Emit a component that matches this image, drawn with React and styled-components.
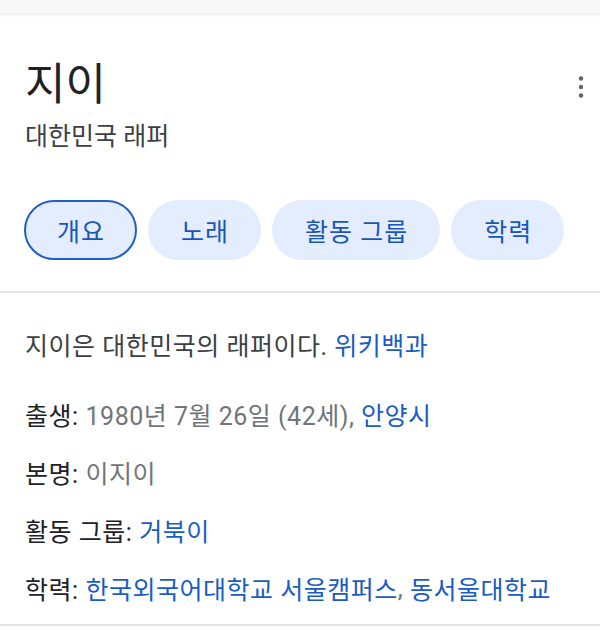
import React from 'react';
import styled, { createGlobalStyle } from 'styled-components';

const Global = createGlobalStyle`
  body {
    margin: 0;
    background: #ffffff;
    font-family: Roboto, "Noto Sans CJK KR", sans-serif;
  }
`

const Page = styled.div`
  width: 600px;
  height: 640px;
  overflow: hidden;
  background: #ffffff;
`

const TopStrip = styled.div`
  height: 13px;
  background: #f8f8f8;
  box-shadow: 0 1px 3px rgba(0, 0, 0, 0.08);
  border-bottom: 1px solid #efefef;
`

const Header = styled.div`
  display: flex;
  justify-content: space-between;
  align-items: flex-start;
  padding: 45px 3px 0 25px;
`

const Title = styled.h1`
  margin: 0;
  font-size: 44px;
  line-height: 52px;
  font-weight: 400;
  color: #202124;
`

const Subtitle = styled.div`
  margin-top: 11px;
  font-size: 25px;
  line-height: 30px;
  color: #3c4043;
`

const MoreButton = styled.button`
  width: 32px;
  height: 32px;
  margin-top: 12px;
  padding: 0;
  border: none;
  background: none;
  display: flex;
  align-items: center;
  justify-content: center;
`

const Chips = styled.div`
  display: flex;
  gap: 11px;
  margin-top: 48px;
  padding-left: 24px;
`

const Chip = styled.button`
  height: 60px;
  padding: 0 30px 0 31px;
  border-radius: 30px;
  border: 2px solid ${props => (props.active ? '#1f5fc6' : 'transparent')};
  background: #e3edfd;
  color: #1a56b8;
  font-family: Roboto, "Noto Sans CJK KR", sans-serif;
  font-size: 25px;
  letter-spacing: 1px;
  white-space: nowrap;
`

const Divider = styled.div`
  height: 2px;
  background: #e4e4e4;
  margin-top: ${props => props.top}px;
`

const Body = styled.div`
  padding: 22px 25px 0 25px;
`

const Line = styled.div`
  height: 58px;
  display: flex;
  align-items: center;
  font-size: 25px;
  letter-spacing: 0.5px;
  color: ${props => props.color || '#202124'};
  white-space: nowrap;
  margin-bottom: ${props => props.gap || 0}px;
`

const Label = styled.span`
  color: #202124;
  margin-right: 7px;
`

const Value = styled.span`
  color: #70757a;
`

const Link = styled.a`
  color: #1a5cc4;
  text-decoration: none;
`

const Kebab = () => (
  <svg width="6" height="24" viewBox="0 0 6 24">
    <circle cx="3" cy="3.5" r="2.2" fill="#5f6368" />
    <circle cx="3" cy="12" r="2.2" fill="#5f6368" />
    <circle cx="3" cy="20.5" r="2.2" fill="#5f6368" />
  </svg>
)

const tabs = ['개요', '노래', '활동 그룹', '학력']

const App = () => {
  return <Page>
    <Global />
    <TopStrip />
    <Header>
      <div>
        <Title>지이</Title>
        <Subtitle>대한민국 래퍼</Subtitle>
      </div>
      <MoreButton><Kebab /></MoreButton>
    </Header>
    <Chips>
      {tabs.map((t, i) => <Chip key={t} active={i === 0}>{t}</Chip>)}
    </Chips>
    <Divider top={31} />
    <Body>
      <Line color="#3c4043" gap={12}>지이은 대한민국의 래퍼이다.&nbsp;<Link>위키백과</Link></Line>
      <Line><Label>출생:</Label><Value>1980년 7월 26일 (42세),&nbsp;</Value><Link>안양시</Link></Line>
      <Line><Label>본명:</Label><Value>이지이</Value></Line>
      <Line><Label>활동 그룹:</Label><Link>거북이</Link></Line>
      <Line><Label>학력:</Label><Link>한국외국어대학교 서울캠퍼스</Link><Value>,&nbsp;</Value><Link>동서울대학교</Link></Line>
    </Body>
    <Divider top={7} />
  </Page>
}

export default App
